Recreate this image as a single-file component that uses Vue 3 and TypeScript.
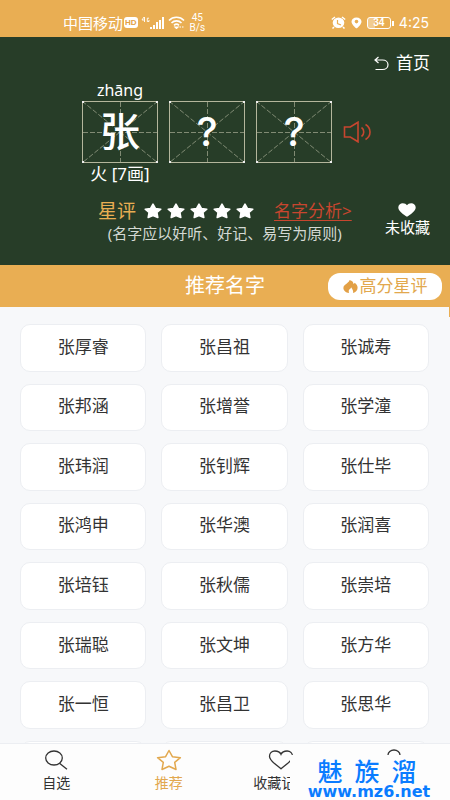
<script setup lang="ts">
interface NameCell {
  glyph: string
  pinyin: string
  info: string
}

const cells: NameCell[] = [
  { glyph: '张', pinyin: 'zhāng', info: '火 [7画]' },
  { glyph: '?', pinyin: '', info: '' },
  { glyph: '?', pinyin: '', info: '' },
]

const names: string[] = [
  '张厚睿', '张昌祖', '张诚寿',
  '张邦涵', '张增誉', '张学潼',
  '张玮润', '张钊辉', '张仕毕',
  '张鸿申', '张华澳', '张润喜',
  '张培钰', '张秋儒', '张崇培',
  '张瑞聪', '张文坤', '张方华',
  '张一恒', '张昌卫', '张思华',
]
</script>

<template>
  <div class="page">
    <header class="status">
      <div class="status-left">
        <span class="carrier">中国移动</span>
        <span class="hd">HD</span>
        <svg class="signal" width="24" height="14" viewBox="0 0 24 14" fill="#fff">
          <path d="M3 1L1 4h3M3.500 1v5M8 2.200H6.300v3.300H8V4" fill="none" stroke="#fff" stroke-width=".9" />
          <rect x="9" y="11" width="2" height="2" />
          <rect x="12" y="9" width="2" height="4" />
          <rect x="15" y="6" width="2" height="7" />
          <rect x="18" y="4" width="2" height="9" />
          <rect x="21" y="1" width="2" height="12" />
        </svg>
        <svg width="17" height="13" viewBox="0 0 17 13" fill="none" stroke="#fff" stroke-width="1.6">
          <path d="M1 4.500C5 .2 12 .2 16 4.500M3.500 7C6.300 4.200 10.700 4.200 13.500 7M6 9.300c1.500-1.400 3.500-1.400 5 0" />
          <path d="M7 11h3l-1.500 1.500zM11.500 11h1.500M14 11h1.500" stroke-width="1.200" />
        </svg>
        <span class="speed"><span>45</span><span>B/s</span></span>
      </div>
      <div class="status-right">
        <svg width="15" height="13" viewBox="0 0 15 13">
          <path d="M.8 3.500L4 1M14.200 3.500L11 1M3 11l-1.500 1.500M12 11l1.500 1.500" stroke="#fff" stroke-width="1.500" />
          <ellipse cx="7.500" cy="6.800" rx="5.800" ry="5.200" fill="#fff" />
          <path d="M6.500 4v3.500l3.500 1.500" fill="none" stroke="#e9ae53" stroke-width="1.200" />
        </svg>
        <svg width="11" height="12" viewBox="0 0 11 12">
          <path d="M5.500.5C2.600.5.5 2.300.5 4.700.5 7.500 5.500 11.500 5.500 11.500s5-4 5-6.800C10.500 2.300 8.400.5 5.500.5z" fill="#fff" />
          <circle cx="5.500" cy="4.600" r="1.800" fill="#e9ae53" />
        </svg>
        <span class="battery">34</span>
        <span class="clock">4:25</span>
      </div>
    </header>

    <section class="board">
      <a class="home" href="#home">
        <svg width="15" height="15" viewBox="0 0 15 15" fill="none" stroke="#fff" stroke-width="1.200">
          <path d="M4.500 1L1 4l3.500 3M1 4h7.500c3.300 0 5.500 2 5.500 4.700s-2.200 4.800-5.500 4.800H1.500" />
        </svg>
        首页
      </a>

      <div class="cells">
        <div v-for="(cell, i) in cells" :key="i" class="cell">
          <span class="pinyin">{{ cell.pinyin }}</span>
          <div class="square">
            <svg class="guides" viewBox="0 0 76 62" preserveAspectRatio="none" fill="none" stroke="#98a088">
              <path d="M0 0L76 62M76 0L0 62M38.500 1v60M1 31.500h74" stroke-dasharray="5 2" stroke-width=".8" />
              <rect x=".5" y=".5" width="75" height="61" stroke="#b4b69c" />
              <path d="M0 1h2M74 1h2M0 61h2M74 61h2" stroke="#eee" stroke-width="2" />
            </svg>
            <span class="glyph">{{ cell.glyph }}</span>
          </div>
          <span class="info">{{ cell.info }}</span>
        </div>
        <button class="speak" type="button" aria-label="朗读">
          <svg width="29" height="22" viewBox="0 0 29 22" fill="none" stroke="#c8462f" stroke-width="1.600">
            <path d="M1.500 6h5.800L15 1.200v19.600L7.300 16H1.500zM18.500 6.500c3 2 3 7 0 9M22.500 3.500c6 3.500 6 11.500 0 15" />
          </svg>
        </button>
      </div>

      <div class="summary">
        <div class="rating">
          <div class="rating-row">
            <span class="rating-label">星评</span>
            <span class="stars">
              <svg v-for="n in 5" :key="n" width="18" height="16" viewBox="0 0 18 16">
                <path d="M9 1.200l2.400 4.300 5.400.7-3.900 3.300.9 4.900L9 12.500l-4.800 1.900.9-4.900L1.200 6.200l5.400-.7z" fill="#fff" stroke="#fff" stroke-width="1.600" stroke-linejoin="round" />
              </svg>
            </span>
            <a class="analysis" href="#analysis">名字分析&gt;</a>
          </div>
          <p class="note">(名字应以好听、好记、易写为原则)</p>
        </div>
        <button class="favorite" type="button">
          <svg width="18" height="14" viewBox="0 0 18 14" fill="#fff">
            <path d="M9 13.800C6 11.500.3 8.500.3 4.500.3 2 2.300.2 4.800.2 6.700.2 8.200 1 9 2.300 9.800 1 11.300.2 13.200.2c2.500 0 4.500 1.800 4.500 4.300 0 4-5.700 7-8.700 9.300z" />
          </svg>
          未收藏
        </button>
      </div>
    </section>

    <div class="band">
      <h1>推荐名字</h1>
      <button class="top-rated" type="button">
        <svg width="15" height="13" viewBox="0 0 15 13">
          <path d="M6.500.1C9.300.8 10.400 2.300 10.500 4c.7-.2 1-.6 1.100-1.200C13.500 4 14.600 5.700 14.600 7.700c0 2.600-1.700 4.500-4.600 5.200.6-2-.4-3.500-1.900-5.700-.3 1.100-.8 1.700-1.500 2.100-.8.600-1.100 1.800-.6 3.600C2.700 12.500.4 10.500.4 7.900c0-2.200 1.500-3.200 3.400-4.500C5.300 2.400 6.400 1.600 6.500.1z" fill="#e2a046" />
        </svg>
        高分星评
      </button>
    </div>

    <main class="names">
      <button v-for="name in names" :key="name" class="name" type="button">{{ name }}</button>
      <span v-for="n in 3" :key="n" class="name next" aria-hidden="true"></span>
    </main>

    <nav class="tabs">
      <a class="tab" href="#custom">
        <svg width="26" height="22" viewBox="0 0 26 22" fill="none" stroke="#333" stroke-width="1.300">
          <ellipse cx="11" cy="9" rx="8.300" ry="7" />
          <path d="M16.500 14.200l7.500 6" />
        </svg>
        自选
      </a>
      <a class="tab active" href="#recommend">
        <svg width="26" height="22" viewBox="0 0 26 22" fill="none" stroke="#e2a84e" stroke-width="1.500" stroke-linejoin="round">
          <path d="M13 1.500l3.400 6.200 8 1-5.700 4.600 1.300 7.200-7-3.300-7 3.300 1.300-7.200L1.600 8.700l8-1z" />
        </svg>
        推荐
      </a>
      <a class="tab" href="#favorites">
        <svg width="26" height="22" viewBox="0 0 26 22" fill="none" stroke="#333" stroke-width="1.300">
          <path d="M13 19.800C8 15.500 1.500 12 1.500 7.200 1.500 4.200 3.800 2 6.900 2 9.500 2 12 3 13 5.300 14 3 16.500 2 19.100 2c3.100 0 5.400 2.200 5.400 5.200 0 4.800-6.500 8.300-11.500 12.600z" />
        </svg>
        收藏记录
      </a>
      <a class="tab" href="#me" aria-label="我的">
        <svg width="26" height="22" viewBox="0 0 26 22" fill="none" stroke="#333" stroke-width="1.300">
          <ellipse cx="13" cy="6" rx="6" ry="5" />
          <path d="M2.500 21c0-5 4-8 10.500-8s10.500 3 10.500 8" />
        </svg>
      </a>
      <div class="watermark">
        <div class="mark-title"><span>魅</span><span>族</span><span>溜</span></div>
        <div class="mark-url">www.mz6.net</div>
      </div>
    </nav>
  </div>
</template>

<style>
body {
  margin: 0;
}
</style>

<style scoped>
.page {
  display: flex;
  flex-direction: column;
  min-height: 100vh;
  background: #f7f8fa;
  color: #333;
  font-family: "Noto Sans", "Noto Sans CJK SC", sans-serif;
}

svg {
  display: block;
  flex: none;
}

button {
  margin: 0;
  padding: 0;
  border: 0;
  background: none;
  color: inherit;
  font: inherit;
  cursor: pointer;
}

a {
  color: inherit;
  text-decoration: none;
}

.status {
  box-sizing: border-box;
  display: flex;
  justify-content: space-between;
  height: 37px;
  padding: 8px 21px 0 63px;
  background: #e9ae53;
  color: #fff;
}

.status-left,
.status-right {
  display: flex;
  align-items: center;
  height: 29px;
}

.carrier {
  font-size: 15px;
  line-height: 20px;
}

.hd {
  margin: 0 3px 0 1px;
  padding: 0 1px;
  border-radius: 3px;
  background: #fff;
  color: #e2a046;
  font: 700 8px/11px "Liberation Sans", sans-serif;
}

.signal {
  margin-right: 3px;
}

.speed {
  display: flex;
  flex-direction: column;
  align-items: center;
  margin-left: 5px;
  font: 10px/10px Roboto, sans-serif;
}

.status-right {
  gap: 5px;
}

.battery {
  position: relative;
  box-sizing: border-box;
  width: 24px;
  height: 12px;
  border: 1px solid #fff;
  border-radius: 3px;
  background: linear-gradient(90deg, #f1cb90 34%, transparent 34%);
  font: 700 10px/10px "Liberation Sans", sans-serif;
  text-align: center;
}

.battery::after {
  content: "";
  position: absolute;
  top: 3px;
  right: -4px;
  width: 2px;
  height: 5px;
  background: #fff;
}

.clock {
  margin-left: 3px;
  font: 14px/20px Inter, sans-serif;
}

.board {
  box-sizing: border-box;
  display: flex;
  flex-direction: column;
  height: 228px;
  padding-top: 15px;
  background: #273d28;
  color: #fff;
}

.home {
  display: flex;
  align-items: center;
  align-self: flex-end;
  gap: 7px;
  margin-right: 20px;
  font-size: 17px;
  line-height: 22px;
}

.cells {
  display: flex;
  justify-content: center;
  gap: 11px;
  margin-top: 7px;
  padding-left: 4px;
}

.cell {
  display: flex;
  flex-direction: column;
  align-items: center;
  width: 76px;
}

.pinyin {
  height: 20px;
  font-size: 16px;
  line-height: 18px;
}

.square {
  position: relative;
  display: flex;
  align-items: center;
  justify-content: center;
  width: 100%;
  height: 62px;
}

.guides {
  position: absolute;
  inset: 0;
  width: 100%;
  height: 100%;
}

.glyph {
  position: relative;
  font-family: Inter, "Noto Sans CJK SC", sans-serif;
  font-size: 40px;
  font-weight: 500;
  line-height: 56px;
}

.info {
  height: 22px;
  font-size: 17px;
  line-height: 22px;
}

.speak {
  display: flex;
  align-items: center;
  align-self: flex-start;
  height: 62px;
  margin-top: 20px;
}

.summary {
  display: flex;
  justify-content: space-between;
  margin-top: 14px;
  padding: 0 20px 0 98px;
}

.rating {
  display: flex;
  flex-direction: column;
  align-items: center;
}

.rating-row {
  display: flex;
  align-items: center;
  height: 24px;
}

.rating-label {
  color: #e9ae53;
  font-size: 19px;
  line-height: 24px;
}

.stars {
  display: flex;
  gap: 5px;
  margin: 0 20px 0 8px;
}

.analysis {
  color: #c8462f;
  font-size: 17px;
  line-height: 24px;
  text-decoration: underline;
  text-underline-offset: 3px;
}

.note {
  margin: 0;
  color: #d4d9d4;
  font-size: 15px;
  line-height: 20px;
  white-space: nowrap;
}

.favorite {
  display: flex;
  flex-direction: column;
  align-items: center;
  align-self: flex-start;
  padding-top: 4px;
  font-size: 15px;
  line-height: 20px;
}

.band {
  position: relative;
  display: grid;
  grid-template-columns: 1fr auto 1fr;
  align-items: center;
  height: 42px;
  background: #e9ae53;
  color: #fff;
}

.band::after {
  content: "";
  position: absolute;
  top: 100%;
  right: 0;
  width: 1px;
  height: 10px;
  background: #e9ae53;
}

.band h1 {
  grid-column: 2;
  margin: 0;
  font-size: 20px;
  font-weight: 400;
  line-height: 28px;
}

.top-rated {
  display: flex;
  align-items: center;
  justify-content: center;
  justify-self: end;
  gap: 2px;
  width: 114px;
  height: 27px;
  margin-right: 8px;
  border-radius: 12px;
  background: #fff;
  color: #e2a84e;
  font-size: 17px;
  line-height: 24px;
}

.names {
  flex: 1;
  display: grid;
  grid-template-columns: repeat(3, 1fr);
  grid-template-rows: repeat(7, minmax(47px, 1fr)) 2px;
  gap: 12px 15px;
  padding: 17px 21px 0 20px;
  overflow: hidden;
}

.name {
  padding-bottom: 2px;
  border: 1px solid #eceef2;
  border-radius: 10px;
  background: #fff;
  font-size: 17px;
  line-height: 24px;
}

.next {
  height: 45px;
}

.tabs {
  position: relative;
  display: grid;
  grid-template-columns: repeat(4, 1fr);
  height: 56px;
  border-top: 1px solid #eceef2;
  background: #fdfdfd;
}

.tab {
  display: flex;
  flex-direction: column;
  align-items: center;
  gap: 2px;
  padding-top: 5px;
  font-size: 14px;
  line-height: 20px;
}

.active {
  color: #e2a84e;
}

.watermark {
  position: absolute;
  right: 0;
  bottom: 0;
  display: flex;
  flex-direction: column;
  box-sizing: border-box;
  width: 160px;
  height: 45px;
  padding: 4px 2px 0 0;
  background: #fdfdfd;
  color: #0a7cff;
}

.mark-title {
  display: flex;
  justify-content: center;
  gap: 12px;
  padding-right: 4px;
  font-size: 25px;
  font-weight: 500;
  line-height: 25px;
}

.mark-url {
  font: 700 16px/16px "DejaVu Sans", sans-serif;
  text-align: center;
}
</style>
